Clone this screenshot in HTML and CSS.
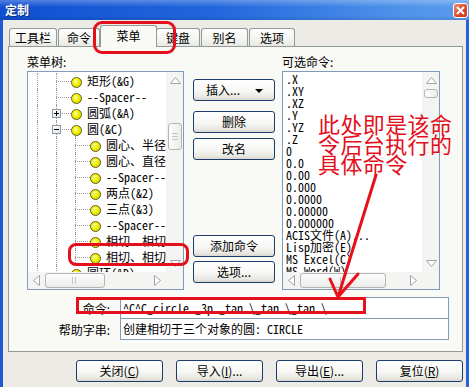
FILE: index.html
```html
<!DOCTYPE html>
<html>
<head>
<meta charset="utf-8">
<link rel="stylesheet" href="styles.css">
</head>
<body>
<div class="win">
  <div class="title">
    <span class="title-text">定制</span>
    <span class="close"><svg width="9" height="9" viewBox="0 0 9 9"><path d="M1 1 L8 8 M8 1 L1 8" stroke="#fff" stroke-width="2"/></svg></span>
  </div>
  <div class="frame">
    <div class="tabs">
      <div class="tab w48">工具栏</div>
      <div class="tab w42">命令</div>
      <div class="tab sel">菜单</div>
      <div class="tab w44">键盘</div>
      <div class="tab w47">别名</div>
      <div class="tab w46">选项</div>
    </div>
    <div class="panel">
      <div class="cols">
        <div class="col-tree">
          <div class="lbl">菜单树:</div>
          <div class="box">
            <div class="tree">
              <div class="row"><i class="g v"></i><i class="g t"></i><i class="bul"></i><span class="tx">矩形(&amp;G)</span></div>
              <div class="row"><i class="g v"></i><i class="g t"></i><i class="bul"></i><span class="tx">--Spacer--</span></div>
              <div class="row"><i class="g v"></i><i class="g t"><b class="exp plus"></b></i><i class="bul"></i><span class="tx">圆弧(&amp;A)</span></div>
              <div class="row"><i class="g v"></i><i class="g t"><b class="exp"></b></i><i class="bul down"></i><span class="tx">圆(&amp;C)</span></div>
              <div class="row"><i class="g v"></i><i class="g v"></i><i class="g t"></i><i class="bul"></i><span class="tx">圆心、半径(&amp;R)</span></div>
              <div class="row"><i class="g v"></i><i class="g v"></i><i class="g t"></i><i class="bul"></i><span class="tx">圆心、直径(&amp;D)</span></div>
              <div class="row"><i class="g v"></i><i class="g v"></i><i class="g t"></i><i class="bul"></i><span class="tx">--Spacer--</span></div>
              <div class="row"><i class="g v"></i><i class="g v"></i><i class="g t"></i><i class="bul"></i><span class="tx">两点(&amp;2)</span></div>
              <div class="row"><i class="g v"></i><i class="g v"></i><i class="g t"></i><i class="bul"></i><span class="tx">三点(&amp;3)</span></div>
              <div class="row"><i class="g v"></i><i class="g v"></i><i class="g t"></i><i class="bul"></i><span class="tx">--Spacer--</span></div>
              <div class="row"><i class="g v"></i><i class="g v"></i><i class="g t"></i><i class="bul"></i><span class="tx">相切、相切、半径</span></div>
              <div class="row"><i class="g v"></i><i class="g v"></i><i class="g t"></i><i class="bul"></i><span class="tx">相切、相切、相切</span></div>
              <div class="row"><i class="g v"></i><i class="g t"></i><i class="bul"></i><span class="tx">圆环(&amp;D)</span></div>
            </div>
            <div class="vs">
              <div class="sbb"><svg width="17" height="17"><path d="M3.5 11.5 L8.5 5.5 L13.5 11.5 Z" fill="#fff" stroke="#a4a4a4"/></svg></div>
              <div class="vtrack"><div class="vthumb t1"></div></div>
              <div class="sbb"><svg width="17" height="17"><path d="M3.5 5.5 L8.5 11.5 L13.5 5.5 Z" fill="#fff" stroke="#a4a4a4"/></svg></div>
            </div>
            <div class="hs">
              <div class="sbb"><svg width="17" height="17"><path d="M11.5 3.5 L5.5 8.5 L11.5 13.5 Z" fill="#fff" stroke="#a4a4a4"/></svg></div>
              <div class="htrack"><div class="hthumb w60"></div></div>
              <div class="sbb"><svg width="17" height="17"><path d="M5.5 3.5 L11.5 8.5 L5.5 13.5 Z" fill="#fff" stroke="#a4a4a4"/></svg></div>
            </div>
            <div class="corner"></div>
          </div>
        </div>
        <div class="col-btns">
          <div class="btn ins"><span>插入...</span><svg width="8" height="4"><path d="M0 0 H8 L4 4 Z" fill="#000"/></svg></div>
          <div class="btn del">删除</div>
          <div class="btn ren">改名</div>
          <div class="btn add">添加命令</div>
          <div class="btn opt">选项...</div>
        </div>
        <div class="col-list">
          <div class="lbl">可选命令:</div>
          <div class="box">
            <div class="list">
              <div>.X</div><div>.XY</div><div>.XZ</div><div>.Y</div><div>.YZ</div><div>.Z</div>
              <div>0</div><div>0.0</div><div>0.00</div><div>0.000</div><div>0.0000</div><div>0.00000</div><div>0.000000</div>
              <div>ACIS文件(A)...</div><div>Lisp加密(E)</div><div>MS Excel(C)</div><div>MS Word(W)</div>
            </div>
            <div class="vs">
              <div class="sbb"><svg width="17" height="17"><path d="M3.5 11.5 L8.5 5.5 L13.5 11.5 Z" fill="#fff" stroke="#a4a4a4"/></svg></div>
              <div class="vtrack"><div class="vthumb t2"></div></div>
              <div class="sbb"><svg width="17" height="17"><path d="M3.5 5.5 L8.5 11.5 L13.5 5.5 Z" fill="#fff" stroke="#a4a4a4"/></svg></div>
            </div>
            <div class="hs">
              <div class="sbb"><svg width="17" height="17"><path d="M11.5 3.5 L5.5 8.5 L11.5 13.5 Z" fill="#fff" stroke="#a4a4a4"/></svg></div>
              <div class="htrack"><div class="hthumb w86"></div></div>
              <div class="sbb"><svg width="17" height="17"><path d="M5.5 3.5 L11.5 8.5 L5.5 13.5 Z" fill="#fff" stroke="#a4a4a4"/></svg></div>
            </div>
            <div class="corner"></div>
          </div>
        </div>
      </div>
      <div class="fields">
        <div class="frow"><span class="flbl">命令:</span><div class="fbox mono">^C^C_circle _3p _tan \_tan \_tan \</div></div>
        <div class="frow f2"><span class="flbl">帮助字串:</span><div class="fbox mono">创建相切于三个对象的圆:  CIRCLE</div></div>
      </div>
    </div>
    <div class="actions">
      <div class="btn act">关闭(<u>C</u>)</div>
      <div class="btn act">导入(<u>I</u>)...</div>
      <div class="btn act">导出(<u>E</u>)...</div>
      <div class="btn act">复位(<u>R</u>)</div>
    </div>
  </div>

  <div class="mark m1"></div>
  <div class="mark m2"></div>
  <div class="mark m3"></div>
  <div class="note">此处即是该命令后台执行的具体命令</div>
  <svg class="arrow" width="469" height="387" viewBox="0 0 469 387">
    <path d="M376 175 L338 297 M330 279 L338 297 L358 274" fill="none" stroke="#e8101a" stroke-width="3" stroke-linecap="round" stroke-linejoin="round"/>
  </svg>
</div>
</body>
</html>
```
FILE: styles.css
```css
* { box-sizing: border-box; margin: 0; padding: 0; }
html, body { width: 469px; height: 387px; overflow: hidden; }
body {
  font-family: "Noto Sans CJK SC", "Liberation Sans", sans-serif;
  font-size: 12px;
  color: #000;
  background: #ecebe6;
}
.win { position: relative; width: 469px; height: 387px; display: flex; flex-direction: column; }

/* title bar */
.title {
  height: 20px; flex: none;
  display: flex; align-items: center; justify-content: space-between;
  padding: 0 1px 0 5px;
  background:
    linear-gradient(to bottom, rgba(255,255,255,.28), rgba(255,255,255,0) 35%, rgba(0,0,0,0) 80%, rgba(0,0,40,.12)),
    linear-gradient(to right, #0f4fd2, #2166dc 45%, #4d92ea 85%, #5a9cee);
}
.title-text { color: #fff; font-weight: bold; font-size: 12px; line-height: 14px; text-shadow: 1px 1px 0 #0a2a7a; }
.close {
  width: 15px; height: 15px;
  display: flex; align-items: center; justify-content: center;
  border: 1px solid #fff; border-radius: 3px;
  background: linear-gradient(135deg, #f08a6c, #d8482a 60%, #c23a20);
}

/* frame */
.frame {
  flex: 1;
  border-left: 3px solid #2058d6; border-right: 3px solid #2a62da;
  padding: 0 3px 0 5px;
  display: flex; flex-direction: column;
}

/* tabs */
.tabs { height: 26px; flex: none; display: flex; align-items: flex-end; padding-left: 1px; position: relative; z-index: 2; }
.tab {
  height: 18px; margin-right: 1px;
  border: 1px solid #919b9c; border-bottom: none; border-radius: 3px 3px 0 0;
  background: linear-gradient(#fefefe, #f4f4f1 60%, #e8e8e3);
  display: flex; align-items: center; justify-content: center;
  font-size: 12px; line-height: 14px;
}
.w48 { width: 48px; }
.w42 { width: 42px; }
.w44 { width: 44px; }
.w46 { width: 46px; }
.w47 { width: 47px; }
.tab.sel {
  width: 57px; height: 22px; margin: 0 -1px -1px -1px;
  background: #f9f9f6; padding-bottom: 2px;
  border-color: #919b9c;
}
.tab.sel + .tab { margin-left: 0; }

/* panel */
.panel {
  width: 455px; height: 306px; flex: none;
  border: 1px solid #919b9c;
  background: #f9f9f6;
  padding: 8px 0 0 18px;
}
.cols { display: flex; }
.lbl { height: 14px; line-height: 14px; font-size: 12px; margin-bottom: 2px; }
.col-tree { width: 157px; }
.col-list { width: 158px; }
.box {
  width: 157px; height: 219px;
  border: 1px solid #7f9db9; background: #fff;
  display: grid; grid-template-columns: 1fr 17px; grid-template-rows: 1fr 17px;
  overflow: hidden;
}
.col-list .box { width: 158px; }

/* tree */
.tree { overflow: hidden; padding-top: 1px; font-family: "Noto Sans Mono CJK SC", "Noto Sans CJK SC", "Liberation Mono", monospace; }
.row { height: 16px; display: flex; align-items: center; white-space: nowrap; }
.g, .bul { flex: none; width: 19px; height: 16px; position: relative; display: block; }
.g.v::before, .g.t::before, .bul.down::after {
  content: ""; position: absolute; left: 9px; top: 0; bottom: 0;
  border-left: 1px dotted #9c9c9c;
}
.bul.down::after { top: 9px; }
.g.t::after {
  content: ""; position: absolute; left: 9px; top: 8px; width: 15px;
  border-top: 1px dotted #9c9c9c;
}
.exp {
  position: absolute; z-index: 1; left: 5px; top: 4px; width: 9px; height: 9px;
  border: 1px solid #8a98a8; background: linear-gradient(135deg, #fff, #e6e6e0);
  display: block;
}
.exp::before { content: ""; position: absolute; left: 1px; top: 3px; width: 5px; height: 1px; background: #000; }
.exp.plus::after { content: ""; position: absolute; left: 3px; top: 1px; width: 1px; height: 5px; background: #000; }
.bul::before {
  content: ""; position: absolute; left: 5px; top: 4px; width: 9px; height: 9px;
  border-radius: 50%; border: 1px solid #5e5e18;
  background: radial-gradient(circle at 40% 38%, #ffffa0, #f0f000 45%, #c8c800);
  z-index: 1;
}
.tx { margin-left: 2px; font-size: 12px; line-height: 16px; }

/* scrollbars */
.vs { display: flex; flex-direction: column; background: #f4f4f2; border-left: 1px solid #f0f0ee; }
.hs { display: flex; background: #f4f4f2; }
.corner { background: #f4f4f2; }
.sbb { width: 17px; height: 17px; flex: none; display: flex; align-items: center; justify-content: center; }
.sbb svg { display: block; }
.vtrack { flex: 1; display: flex; flex-direction: column; padding: 0 1px; }
.htrack { flex: 1; display: flex; padding: 1px 0; }
.vthumb {
  height: 27px; border: 1px solid #b4b4b4; border-radius: 3px;
  background: linear-gradient(to right, #fdfdfd, #ececea);
  position: relative;
}
.vthumb.t1 { margin-top: 34px; }
.vthumb.t2 { margin-top: 0; height: 9px; }
.vthumb.t1::after {
  content: ""; position: absolute; left: 3px; right: 3px; top: 9px; height: 7px;
  background: repeating-linear-gradient(to bottom, #c4c4c4 0 1px, transparent 1px 3px);
}
.hthumb {
  border: 1px solid #b4b4b4; border-radius: 3px;
  background: linear-gradient(#fdfdfd, #ececea);
  position: relative;
}
.hthumb::after {
  content: ""; position: absolute; top: 3px; bottom: 3px; left: 50%; width: 5px; margin-left: -3px;
  background: repeating-linear-gradient(to right, #c4c4c4 0 1px, transparent 1px 3px);
}
.w60 { width: 60px; }
.w86 { width: 86px; }

/* list */
.list {
  overflow: hidden; padding: 1px 0 0 3px;
  font-family: "Noto Sans Mono CJK SC", "Liberation Mono", "Noto Sans CJK SC", monospace;
  font-size: 12px; line-height: 12px; white-space: nowrap;
}
.list div { height: 12px; line-height: 12px; }

/* middle buttons */
.col-btns { width: 82px; margin: 0 7px 0 9px; display: flex; flex-direction: column; padding-top: 24px; }
.btn {
  height: 22px; flex: none;
  border: 1px solid #1c3c6c; border-radius: 3px;
  background: linear-gradient(#ffffff, #f6f6f3 55%, #e9e8e2 85%, #d8d6cd);
  display: flex; align-items: center; justify-content: center;
  font-size: 12px; line-height: 14px;
}
.btn.ins { justify-content: space-between; padding: 0 11px 0 12px; }
.btn.ins svg { display: block; margin-top: 1px; }
.btn.del { margin-top: 10px; }
.btn.ren { margin-top: 5px; }
.btn.add { margin-top: 75px; }
.btn.opt { margin-top: 4px; }

/* fields */
.fields { margin-top: 7px; }
.frow { display: flex; align-items: center; height: 22px; }
.frow.f2 { margin-top: -1px; }
.flbl { width: 83px; text-align: right; margin-right: 10px; font-size: 12px; }
.fbox {
  width: 329px; height: 22px;
  border: 1px solid #7f9db9; background: #fff;
  padding-left: 2px; line-height: 20px; white-space: nowrap; overflow: hidden;
}
.mono { font-family: "Noto Sans Mono CJK SC", "Liberation Mono", "Noto Sans CJK SC", monospace; font-size: 12px; }

/* actions */
.actions { display: flex; justify-content: flex-end; gap: 13px; margin-top: 8px; }
.btn.act { width: 87px; }
.btn u { text-decoration: underline; }

/* annotations */
.mark { position: absolute; border: 3px solid #e4101c; z-index: 5; }
.m1 { left: 93px; top: 21px; width: 83px; height: 33px; border-radius: 9px; }
.m2 { left: 68px; top: 243px; width: 121px; height: 23px; border-radius: 8px; }
.m3 { left: 76px; top: 297px; width: 290px; height: 17px; }
.note {
  position: absolute; left: 318px; top: 113px; width: 140px; z-index: 5;
  color: #e4101c; font-size: 22px; line-height: 20px; letter-spacing: 0.4px;
  font-family: "Noto Sans CJK SC", sans-serif;
}
.arrow { position: absolute; left: 0; top: 0; z-index: 6; pointer-events: none; }
```
